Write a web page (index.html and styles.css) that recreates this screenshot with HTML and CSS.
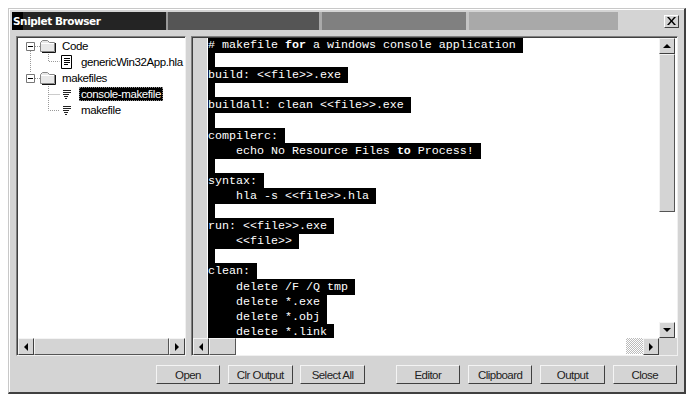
FILE: index.html
```html
<!DOCTYPE html>
<html lang="en">
<head>
<meta charset="utf-8">
<title>Sniplet Browser</title>
<link rel="stylesheet" href="styles.css">
</head>
<body>
<div class="window">
  <div class="titlebar">
    <div class="bands">
      <div class="band b1"><span class="title">Sniplet Browser</span></div>
      <div class="band b2"></div>
      <div class="band b3"></div>
      <div class="band b4"></div>
    </div>
    <button class="close-x" aria-label="Close"><svg width="9" height="8" viewBox="0 0 9 8"><path d="M0 0h2l2.500 3L7 0h2L5.500 4 9 8H7L4.500 5 2 8H0l3.500-4z" fill="#000"/></svg></button>
  </div>
  <div class="panels">
    <div class="panel tree-panel">
      <div class="tree">
        <svg class="connectors" width="100" height="90" viewBox="0 0 100 90">
          <path d="M12.500 13v21M17 8.500h5M17 40.500h5M30.500 16v7.500h11M30.500 48v24.500h11M30.500 56.500h11" stroke="#999" stroke-dasharray="1 1" fill="none"/>
        </svg>
        <div class="tree-row">
          <svg class="exp" width="9" height="9" viewBox="0 0 9 9"><path d="M.5.500h8v8h-8z" fill="#fff" stroke="#777"/><path d="M2 4.500h5" stroke="#000"/></svg>
          <svg class="folder" width="16" height="14" viewBox="0 0 16 14"><path d="M.5 3.500l2-2h5l2 2h5v9H.500z" fill="#e8e8e8" stroke="#888"/><path d="M1 4.500h13" stroke="#fff"/><path d="M15.500 4v9.500H2" stroke="#111" fill="none"/></svg>
          <span class="label">Code</span>
        </div>
        <div class="tree-row child">
          <svg class="doc" width="12" height="14" viewBox="0 0 12 14"><path d="M.5.500h10v13H.500z" fill="#fff" stroke="#000"/><path d="M3 3.500h6M3 5.500h6M3 7.500h6M3 9.500h4" stroke="#000"/></svg>
          <span class="label">genericWin32App.hla</span>
        </div>
        <div class="tree-row">
          <svg class="exp" width="9" height="9" viewBox="0 0 9 9"><path d="M.5.500h8v8h-8z" fill="#fff" stroke="#777"/><path d="M2 4.500h5" stroke="#000"/></svg>
          <svg class="folder" width="16" height="14" viewBox="0 0 16 14"><path d="M.5 3.500l2-2h5l2 2h5v9H.500z" fill="#e8e8e8" stroke="#888"/><path d="M1 4.500h13" stroke="#fff"/><path d="M15.500 4v9.500H2" stroke="#111" fill="none"/></svg>
          <span class="label">makefiles</span>
        </div>
        <div class="tree-row child">
          <svg class="lines" width="8" height="9" viewBox="0 0 8 9"><path d="M0 .5h8M0 2.500h8M0 4.500h6M1 6.500h4M2 8.500h2" stroke="#222"/></svg>
          <span class="label selected">console-makefile</span>
        </div>
        <div class="tree-row child">
          <svg class="lines" width="8" height="9" viewBox="0 0 8 9"><path d="M0 .5h8M0 2.500h8M0 4.500h6M1 6.500h4M2 8.500h2" stroke="#222"/></svg>
          <span class="label">makefile</span>
        </div>
      </div>
      <div class="hbar">
        <button class="sb-btn"><span class="arrow left"></span></button>
        <div class="h-thumb wide"></div>
        <button class="sb-btn"><span class="arrow right"></span></button>
      </div>
    </div>
    <div class="panel code-panel">
      <div class="editor">
        <div class="gutter"></div>
<pre class="code"><span># makefile <b>for</b> a windows console application </span>
<span> </span>
<span>build: &lt;&lt;file&gt;&gt;.exe </span>
<span> </span>
<span>buildall: clean &lt;&lt;file&gt;&gt;.exe </span>
<span> </span>
<span>compilerc: </span>
<span>    echo No Resource Files <b>to</b> Process! </span>
<span> </span>
<span>syntax: </span>
<span>    hla -s &lt;&lt;file&gt;&gt;.hla </span>
<span> </span>
<span>run: &lt;&lt;file&gt;&gt;.exe </span>
<span>    &lt;&lt;file&gt;&gt; </span>
<span> </span>
<span>clean: </span>
<span>    delete /F /Q tmp </span>
<span>    delete *.exe </span>
<span>    delete *.obj </span>
<span>    delete *.link </span></pre>
        <div class="vbar">
          <button class="sb-btn"><span class="arrow up"></span></button>
          <div class="v-thumb"></div>
          <div class="v-track"></div>
          <button class="sb-btn"><span class="arrow down"></span></button>
        </div>
      </div>
      <div class="hbar code-hbar">
        <button class="sb-btn"><span class="arrow left"></span></button>
        <div class="h-thumb"></div>
        <div class="h-track"><div class="dither"></div></div>
        <button class="sb-btn"><span class="arrow right"></span></button>
        <div class="corner"></div>
      </div>
    </div>
  </div>
  <div class="buttons">
    <button class="btn">Open</button>
    <button class="btn">Clr Output</button>
    <button class="btn">Select All</button>
    <button class="btn group-start">Editor</button>
    <button class="btn">Clipboard</button>
    <button class="btn">Output</button>
    <button class="btn">Close</button>
  </div>
</div>
</body>
</html>
```
FILE: styles.css
```css
html, body { margin: 0; padding: 0; background: #fff; }
body { padding: 8px; box-sizing: border-box; width: 694px; height: 403px; overflow: hidden; }
.window {
  box-sizing: border-box;
  width: 678px;
  height: 386px;
  background: #d4d4d4;
  border-top: 1px solid #c8c8c8;
  border-left: 1px solid #c8c8c8;
  border-right: 2px solid #404040;
  border-bottom: 2px solid #404040;
  box-shadow: inset 1px 1px 0 #fff;
  padding: 3px 3px 8px 3px;
  display: flex;
  flex-direction: column;
  font-family: "Liberation Sans", Arial, sans-serif;
}
.titlebar { display: flex; height: 18px; align-items: center; }
.bands { display: flex; height: 18px; width: 606px; }
.band { height: 18px; box-sizing: border-box; }
.b1 { width: 154px; background: linear-gradient(90deg, #000 11px, #242424 11px); }
.b2 { width: 153px; background: #555; border-left: 2px solid #999; }
.b3 { width: 147px; background: #808080; border-left: 3px solid #aaa; }
.b4 { width: 152px; background: #a9a9a9; border-left: 3px solid #c4c4c4; }
.title {
  display: block;
  padding-left: 1px;
  font: bold 10.5px/18px "DejaVu Sans", Verdana, sans-serif;
  letter-spacing: -0.45px;
  color: #fff;
}
.close-x {
  margin: 0 0 0 46px;
  width: 15px;
  height: 13px;
  padding: 0;
  background: #d4d4d4;
  border: 1px solid;
  border-color: #fff #404040 #404040 #fff;
  display: flex;
  align-items: center;
  justify-content: center;
}
.panels { display: flex; gap: 5px; margin-top: 6px; margin-left: 4px; height: 320px; }
.panel {
  box-sizing: border-box;
  height: 320px;
  border: 1px solid;
  border-color: #808080 #f0f0f0 #f0f0f0 #808080;
  box-shadow: inset 1px 1px 0 #404040;
  background: #fff;
  display: flex;
  flex-direction: column;
  padding: 1px 0 0 1px;
}
.tree-panel { width: 170px; }
.code-panel { width: 487px; }
.tree { position: relative; flex: 1; min-height: 0; overflow: hidden; font-size: 11.5px; letter-spacing: -0.4px; }
.connectors { position: absolute; left: 0; top: 0; }
.tree-row { display: flex; align-items: center; height: 16px; padding-left: 8px; position: relative; }
.tree-row svg { flex: none; }
.exp { margin-right: 5px; }
.folder { margin-right: 6px; }
.child { padding-left: 43px; }
.doc { margin-right: 8px; }
.lines { margin-left: 2px; margin-right: 10px; }
.label { color: #000; line-height: 14px; white-space: nowrap; }
.selected { background: #000; color: #fff; margin-left: -2px; padding: 0 2px; outline: 1px dotted #888; outline-offset: -1px; }
.hbar { display: flex; height: 17px; flex: none; background: #fff; }
.sb-btn {
  box-sizing: border-box;
  width: 16px;
  height: 16px;
  padding: 0;
  flex: none;
  background: #d4d4d4;
  border: 1px solid;
  border-color: #f4f4f4 #404040 #404040 #f4f4f4;
  display: flex;
  align-items: center;
  justify-content: center;
}
.hbar .sb-btn { height: 17px; }
.arrow { display: block; width: 0; height: 0; border: 4px solid transparent; }
.arrow.left { border-right-color: #000; border-left-width: 0; }
.arrow.right { border-left-color: #000; border-right-width: 0; }
.arrow.up { border-bottom-color: #000; border-top-width: 0; }
.arrow.down { border-top-color: #000; border-bottom-width: 0; }
.h-thumb {
  box-sizing: border-box;
  background: #d4d4d4;
  border: 1px solid;
  border-color: #f4f4f4 #555 #555 #f4f4f4;
  width: 27px;
  height: 17px;
  flex: none;
}
.h-thumb.wide { width: auto; flex: 1; }
.h-track { flex: 1; background: #fff; display: flex; justify-content: flex-end; }
.dither {
  width: 17px;
  height: 16px;
  background: repeating-conic-gradient(#bbb 0 25%, #fff 0 50%) 0 0 / 2px 2px;
}
.code-hbar .corner { width: 18px; flex: none; background: #d4d4d4; }
.editor { display: flex; flex: 1; min-height: 0; }
.gutter { width: 14px; flex: none; background: #d4d4d4; border-right: 1px solid #fff; }
.code {
  flex: 1;
  min-width: 0;
  margin: 0;
  padding: 0;
  overflow: hidden;
  font: 11.67px/15.1px "Liberation Mono", "Courier New", monospace;
  color: #fff;
  background: #fff;
}
.code span { background: #000; padding: 1px 0; }
.vbar { width: 16px; flex: none; display: flex; flex-direction: column; margin-right: 2px; }
.v-thumb {
  box-sizing: border-box;
  height: 158px;
  background: #d4d4d4;
  border: 1px solid;
  border-color: #f4f4f4 #555 #555 #f4f4f4;
  flex: none;
}
.v-track { flex: 1; background: #fff; }
.buttons { display: flex; gap: 7.8px; margin-top: 9px; justify-content: flex-end; padding-right: 4px; }
.btn {
  box-sizing: border-box;
  width: 64.5px;
  height: 19px;
  padding: 0;
  background: #d4d4d4;
  border: 1px solid;
  border-color: #f4f4f4 #404040 #404040 #f4f4f4;
  font: 11.5px "Liberation Sans", Arial, sans-serif;
  letter-spacing: -0.55px;
  color: #222;
}
.group-start { margin-left: 23px; }
```
